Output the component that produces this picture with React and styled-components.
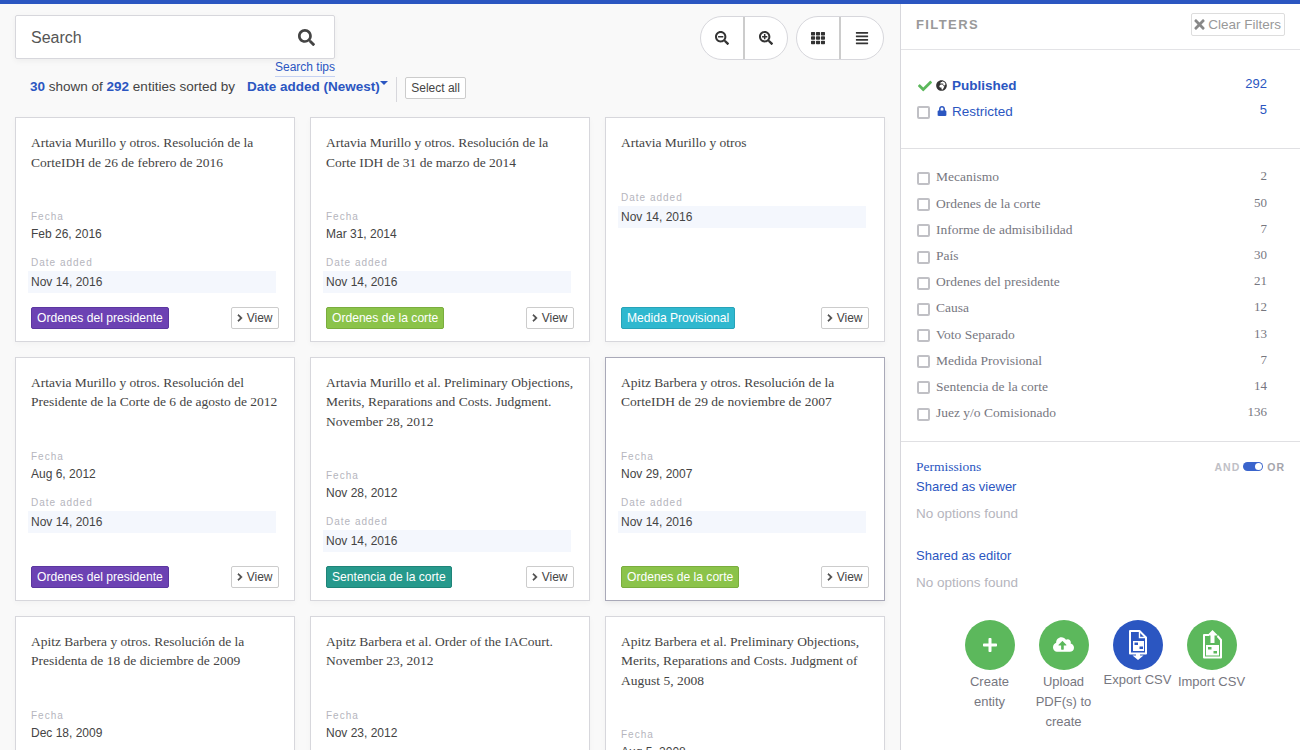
import React from "react";
import styled, { createGlobalStyle } from "styled-components";
import {
  FaAlignJustify,
  FaCheck,
  FaChevronRight,
  FaCloudUploadAlt,
  FaGlobeAfrica,
  FaLock,
  FaPlus,
  FaSearch,
  FaSearchMinus,
  FaSearchPlus,
  FaTh,
  FaTimes,
} from "react-icons/fa";

const BLUE = "#2b56c1";
const SANS = '"Liberation Sans", Arial, sans-serif';
const SERIF = '"Liberation Serif", "Times New Roman", serif';

const TYPES = {
  president: { label: "Ordenes del presidente", bg: "#6c42b3", border: "#5b37a0" },
  court: { label: "Ordenes de la corte", bg: "#8bc34a", border: "#7aad3e" },
  measure: { label: "Medida Provisional", bg: "#2fb8cf", border: "#27a3b8" },
  sentence: { label: "Sentencia de la corte", bg: "#26998c", border: "#1f8478" },
};

const entities = [
  { title: "Artavia Murillo y otros. Resolución de la CorteIDH de 26 de febrero de 2016", date: "Feb 26, 2016", added: "Nov 14, 2016", type: "president" },
  { title: "Artavia Murillo y otros. Resolución de la Corte IDH de 31 de marzo de 2014", date: "Mar 31, 2014", added: "Nov 14, 2016", type: "court" },
  { title: "Artavia Murillo y otros", added: "Nov 14, 2016", type: "measure" },
  { title: "Artavia Murillo y otros. Resolución del Presidente de la Corte de 6 de agosto de 2012", date: "Aug 6, 2012", added: "Nov 14, 2016", type: "president" },
  { title: "Artavia Murillo et al. Preliminary Objections, Merits, Reparations and Costs. Judgment. November 28, 2012", date: "Nov 28, 2012", added: "Nov 14, 2016", type: "sentence" },
  { title: "Apitz Barbera y otros. Resolución de la CorteIDH de 29 de noviembre de 2007", date: "Nov 29, 2007", added: "Nov 14, 2016", type: "court", active: true },
  { title: "Apitz Barbera y otros. Resolución de la Presidenta de 18 de diciembre de 2009", date: "Dec 18, 2009" },
  { title: "Apitz Barbera et al. Order of the IACourt. November 23, 2012", date: "Nov 23, 2012" },
  { title: "Apitz Barbera et al. Preliminary Objections, Merits, Reparations and Costs. Judgment of August 5, 2008", date: "Aug 5, 2008" },
];

const filters = [
  ["Mecanismo", 2],
  ["Ordenes de la corte", 50],
  ["Informe de admisibilidad", 7],
  ["País", 30],
  ["Ordenes del presidente", 21],
  ["Causa", 12],
  ["Voto Separado", 13],
  ["Medida Provisional", 7],
  ["Sentencia de la corte", 14],
  ["Juez y/o Comisionado", 136],
];

const ExportIcon = () => (
  <svg width="22" height="30" viewBox="0 0 22 30" fill="none">
    <path d="M3 1h9.5L19 7.5V23.5H3z" stroke="#fff" strokeWidth="2" strokeLinejoin="round" />
    <path d="M12.5 1v6.5H19" stroke="#fff" strokeWidth="1.4" />
    <rect x="6" y="11" width="11" height="10" fill="#fff" />
    <rect x="7.5" y="12.5" width="3.5" height="2.5" fill={BLUE} />
    <rect x="12.5" y="16.5" width="3.5" height="2.5" fill={BLUE} />
    <path d="M9 24h4v1.5h3.5L11 30 5.5 25.5H9z" fill="#fff" />
  </svg>
);

const ImportIcon = () => (
  <svg width="22" height="30" viewBox="0 0 22 30" fill="none">
    <path d="M8 5H3v22.5h17V10l-3.5-4" stroke="#fff" strokeWidth="2" strokeLinejoin="round" />
    <rect x="5" y="15" width="13" height="10.5" fill="#fff" />
    <rect x="7" y="17" width="3.5" height="2.5" fill="#5cb85c" />
    <rect x="12.5" y="21" width="3.5" height="2.5" fill="#5cb85c" />
    <path d="M11.5 0l5.5 5.5h-3.5V13h-4V5.5H6z" fill="#fff" />
  </svg>
);

const GlobalStyle = createGlobalStyle`
  html, body {
    margin: 0;
    height: 100%;
    overflow: hidden;
    background: #f9f9f9;
  }
`;

const Page = styled.div`
  display: flex;
  height: 746px;
  border-top: 4px solid ${BLUE};
  overflow: hidden;
  font-family: ${SANS};
  color: #444;
`;

const Main = styled.main`
  width: 900px;
  flex: none;
  box-sizing: border-box;
  padding: 11px 15px 0;
  background: #f9f9f9;
`;

const TopRow = styled.div`
  display: flex;
  justify-content: space-between;
`;

const SearchColumn = styled.div`
  width: 320px;
  display: flex;
  flex-direction: column;
  align-items: flex-end;
`;

const SearchBox = styled.div`
  width: 100%;
  height: 44px;
  box-sizing: border-box;
  display: flex;
  align-items: center;
  justify-content: space-between;
  padding: 0 19px 0 15px;
  background: #fff;
  border: 1px solid #d7d7dc;
  border-radius: 2px;
  box-shadow: 0 2px 6px rgba(0, 0, 0, 0.05);
  font-size: 16px;
  color: #555;
  svg {
    font-size: 17px;
    color: #444;
  }
`;

const SearchPlaceholder = styled.span`
  margin-top: 2px;
`;

const SearchTips = styled.a`
  height: 16px;
  margin-top: 1px;
  font-size: 12px;
  line-height: 15px;
  color: ${BLUE};
  border-bottom: 1px solid #c5d2f2;
`;

const ToolGroups = styled.div`
  display: flex;
  gap: 8px;
  margin: 1px 1px 0 0;
`;

const ToolGroup = styled.div`
  display: flex;
  height: 44px;
  box-sizing: border-box;
  background: #fff;
  border: 1px solid #d7d7dc;
  border-radius: 22px;
`;

const ToolButton = styled.button`
  width: 42px;
  padding: 0;
  background: none;
  border: 0;
  color: #333;
  font-size: 14px;
  display: flex;
  align-items: center;
  justify-content: center;
  & + & {
    width: 44px;
    border-left: 2px solid #ccc;
  }
`;

const SortBar = styled.div`
  display: flex;
  align-items: flex-start;
  height: 25px;
  margin: 0 0 15px 15px;
  font-size: 13.5px;
  line-height: 20px;
`;

const Strong = styled.b`
  color: ${BLUE};
`;

const SortValue = styled.b`
  margin-left: 12px;
  color: ${BLUE};
`;

const Caret = styled.span`
  margin: 4px 0 0 0;
  border-left: 4px solid transparent;
  border-right: 4px solid transparent;
  border-top: 4px solid ${BLUE};
`;

const SelectAll = styled.button`
  height: 22px;
  margin-left: 8px;
  padding: 0 5.5px;
  background: #fff;
  border: 1px solid #ccc;
  border-radius: 2px;
  font: 12px ${SANS};
  color: #444;
`;

const Divider = styled.span`
  width: 1px;
  height: 25px;
  margin-left: 8px;
  background: #d7d7dc;
`;

const Grid = styled.div`
  display: grid;
  grid-template-columns: repeat(3, 280px);
  gap: 15px;
`;

const Card = styled.article`
  display: flex;
  flex-direction: column;
  box-sizing: border-box;
  padding: 15px 15px 11.5px;
  background: #fff;
  border: 1px solid ${(p) => (p.$active ? "#a9a9b8" : "#d7d7dc")};
  box-shadow: 0 2px 6px rgba(0, 0, 0, ${(p) => (p.$active ? 0.07 : 0.03)});
`;

const Title = styled.div`
  margin-bottom: 38px;
  font: 13.5px/19.5px ${SERIF};
  color: #444;
`;

const Label = styled.div`
  font-size: 10px;
  line-height: 13px;
  letter-spacing: 1px;
  color: #b5b5bd;
`;

const Value = styled.div`
  height: 22px;
  margin-bottom: 11px;
  font-size: 12px;
  line-height: 22px;
  color: #444;
`;

const HighlightValue = styled(Value)`
  margin: 2px 3px 0 -3px;
  padding-left: 3px;
  background: #f4f7fd;
`;

const CardFooter = styled.div`
  display: flex;
  justify-content: space-between;
  margin-top: auto;
  padding-top: 14px;
`;

const Tag = styled.span`
  height: 22px;
  box-sizing: border-box;
  padding: 0 5px;
  font-size: 12.1px;
  line-height: 20px;
  color: #fff;
  background: ${(p) => p.$bg};
  border: 1px solid ${(p) => p.$border};
  border-radius: 2px;
`;

const ViewButton = styled.button`
  display: flex;
  align-items: center;
  gap: 3px;
  height: 22px;
  padding: 0 5.5px 0 3.5px;
  background: #fff;
  border: 1px solid #ccc;
  border-radius: 2px;
  font: 12px ${SANS};
  color: #444;
  svg {
    font-size: 8px;
    stroke: currentColor;
    stroke-width: 40;
  }
`;

const Sidebar = styled.aside`
  flex: 1;
  display: flex;
  flex-direction: column;
  background: #fff;
  border-left: 1px solid #d7d7dc;
`;

const SidebarHeader = styled.header`
  height: 46px;
  flex: none;
  box-sizing: border-box;
  display: flex;
  align-items: center;
  justify-content: space-between;
  padding: 0 15px 4px;
  border-bottom: 1px solid #e3e3e6;
`;

const SidebarTitle = styled.div`
  font-size: 13px;
  font-weight: bold;
  letter-spacing: 1.4px;
  color: #999;
`;

const ClearButton = styled.button`
  display: flex;
  align-items: center;
  height: 23px;
  padding: 0 3px;
  background: #fff;
  border: 1px solid #ddd;
  border-radius: 2px;
  font: 13.5px ${SANS};
  color: #999;
  svg {
    margin: 0 1px 0 -3px;
    font-size: 15px;
    color: #888;
  }
`;

const Section = styled.section`
  padding: ${(p) => p.$padding};
  border-bottom: ${(p) => (p.$plain ? "0" : "1px solid #e0e0e3")};
`;

const Row = styled.div`
  display: flex;
  align-items: center;
  height: ${(p) => p.$height || "26px"};
  padding: 0 33px 0 16px;
  font-size: 13px;
  color: ${BLUE};
`;

const RowLabel = styled.span`
  flex: 1;
  display: flex;
  align-items: center;
  font-family: ${(p) => (p.$serif ? SERIF : SANS)};
  font-size: 13.5px;
  font-weight: ${(p) => (p.$bold ? "bold" : "normal")};
  color: ${(p) => p.$color || BLUE};
  svg {
    margin-right: 5px;
  }
`;

const Count = styled.span`
  margin-top: ${(p) => (p.$serif ? "-2px" : "-3px")};
  font-family: ${(p) => (p.$serif ? SERIF : SANS)};
  font-size: 13px;
  color: ${(p) => p.$color || BLUE};
`;

const CheckBox = styled.span`
  width: 13px;
  height: 13px;
  flex: none;
  margin: 2px 6px 0 0;
  box-sizing: border-box;
  background: #fff;
  border: 2px solid #c0c0c5;
  border-radius: 2px;
`;

const LockBox = styled(CheckBox)`
  margin-right: 7px;
`;

const Checked = styled(FaCheck)`
  width: 16px;
  margin: 1px 3px 0 0;
  font-size: 14px;
  color: #5cb85c;
`;

const PermissionHead = styled.div`
  display: flex;
  align-items: center;
  justify-content: space-between;
  height: 20px;
  padding: 0 15px;
`;

const PermissionTitle = styled.span`
  font: 13.5px ${SERIF};
  color: ${BLUE};
`;

const Switch = styled.div`
  display: flex;
  align-items: center;
  gap: 3px;
  font-size: 10.5px;
  font-weight: bold;
  letter-spacing: 1px;
  color: #c0c0c6;
`;

const SwitchOn = styled.b`
  margin-left: 1px;
  color: #a5a5ac;
`;

const SwitchTrack = styled.span`
  width: 20px;
  height: 9px;
  border-radius: 5px;
  background: #3a64cc;
  display: flex;
  justify-content: flex-end;
  align-items: center;
  padding-right: 1px;
  box-sizing: border-box;
`;

const SwitchKnob = styled.span`
  width: 7px;
  height: 7px;
  border-radius: 50%;
  background: #fff;
`;

const GroupName = styled.div`
  height: 20px;
  padding: 0 15px;
  font-size: 13px;
  line-height: 20px;
  color: ${BLUE};
`;

const Empty = styled.div`
  height: 20px;
  margin: 7px 0 ${(p) => p.$gap || "0"};
  padding: 0 15px;
  font-size: 13.5px;
  line-height: 20px;
  color: #b5b5bd;
`;

const Actions = styled.div`
  display: flex;
  justify-content: center;
  gap: 4px;
  margin-top: 27px;
  padding: 0 26px;
`;

const Action = styled.div`
  width: 70px;
  display: flex;
  flex-direction: column;
  align-items: center;
  text-align: center;
  font-size: 13px;
  line-height: 20px;
  color: #77777f;
`;

const ActionCircle = styled.div`
  width: 50px;
  height: 50px;
  margin-bottom: ${(p) => p.$gap || "2px"};
  border-radius: 50%;
  display: flex;
  align-items: center;
  justify-content: center;
  background: ${(p) => p.$bg || "#5cb85c"};
  color: #fff;
  font-size: ${(p) => p.$size || "16px"};
`;

const ActionLabel = styled.span`
  white-space: ${(p) => (p.$nowrap ? "nowrap" : "normal")};
`;

const EntityCard = ({ title, date, added, type, active }) => (
  <Card $active={active}>
    <Title>{title}</Title>
    {date && (
      <>
        <Label>Fecha</Label>
        <Value>{date}</Value>
      </>
    )}
    {added && (
      <>
        <Label>Date added</Label>
        <HighlightValue>{added}</HighlightValue>
      </>
    )}
    {type && (
      <CardFooter>
        <Tag $bg={TYPES[type].bg} $border={TYPES[type].border}>
          {TYPES[type].label}
        </Tag>
        <ViewButton>
          <FaChevronRight />
          View
        </ViewButton>
      </CardFooter>
    )}
  </Card>
);

const App = () => (
  <>
    <GlobalStyle />
    <Page>
      <Main>
        <TopRow>
          <SearchColumn>
            <SearchBox>
              <SearchPlaceholder>Search</SearchPlaceholder>
              <FaSearch />
            </SearchBox>
            <SearchTips>Search tips</SearchTips>
          </SearchColumn>
          <ToolGroups>
            <ToolGroup>
              <ToolButton>
                <FaSearchMinus />
              </ToolButton>
              <ToolButton>
                <FaSearchPlus />
              </ToolButton>
            </ToolGroup>
            <ToolGroup>
              <ToolButton>
                <FaTh />
              </ToolButton>
              <ToolButton>
                <FaAlignJustify />
              </ToolButton>
            </ToolGroup>
          </ToolGroups>
        </TopRow>
        <SortBar>
          <span>
            <Strong>30</Strong> shown of <Strong>292</Strong> entities sorted by
          </span>
          <SortValue>Date added (Newest)</SortValue>
          <Caret />
          <Divider />
          <SelectAll>Select all</SelectAll>
        </SortBar>
        <Grid>
          {entities.map((entity) => (
            <EntityCard key={entity.title} {...entity} />
          ))}
        </Grid>
      </Main>
      <Sidebar>
        <SidebarHeader>
          <SidebarTitle>FILTERS</SidebarTitle>
          <ClearButton>
            <FaTimes />
            Clear Filters
          </ClearButton>
        </SidebarHeader>
        <Section $padding="22px 0 24px">
          <Row>
            <Checked />
            <RowLabel $bold>
              <FaGlobeAfrica color="#333" size={11} />
              Published
            </RowLabel>
            <Count>292</Count>
          </Row>
          <Row>
            <LockBox />
            <RowLabel>
              <FaLock size={10} />
              Restricted
            </RowLabel>
            <Count>5</Count>
          </Row>
        </Section>
        <Section $padding="15.4px 0 14.6px">
          {filters.map(([name, count]) => (
            <Row key={name} $height="26.2px">
              <CheckBox />
              <RowLabel $serif $color="#77777f">
                {name}
              </RowLabel>
              <Count $serif $color="#77777f">
                {count}
              </Count>
            </Row>
          ))}
        </Section>
        <Section $padding="15px 0 0" $plain>
          <PermissionHead>
            <PermissionTitle>Permissions</PermissionTitle>
            <Switch>
              AND
              <SwitchTrack>
                <SwitchKnob />
              </SwitchTrack>
              <SwitchOn>OR</SwitchOn>
            </Switch>
          </PermissionHead>
          <GroupName>Shared as viewer</GroupName>
          <Empty $gap="22px">No options found</Empty>
          <GroupName>Shared as editor</GroupName>
          <Empty>No options found</Empty>
        </Section>
        <Actions>
          <Action>
            <ActionCircle>
              <FaPlus />
            </ActionCircle>
            <ActionLabel>Create entity</ActionLabel>
          </Action>
          <Action>
            <ActionCircle $size="21px">
              <FaCloudUploadAlt />
            </ActionCircle>
            <ActionLabel>Upload PDF(s) to create</ActionLabel>
          </Action>
          <Action>
            <ActionCircle $bg={BLUE} $gap="0">
              <ExportIcon />
            </ActionCircle>
            <ActionLabel $nowrap>Export CSV</ActionLabel>
          </Action>
          <Action>
            <ActionCircle>
              <ImportIcon />
            </ActionCircle>
            <ActionLabel $nowrap>Import CSV</ActionLabel>
          </Action>
        </Actions>
      </Sidebar>
    </Page>
  </>
);

export default App;
